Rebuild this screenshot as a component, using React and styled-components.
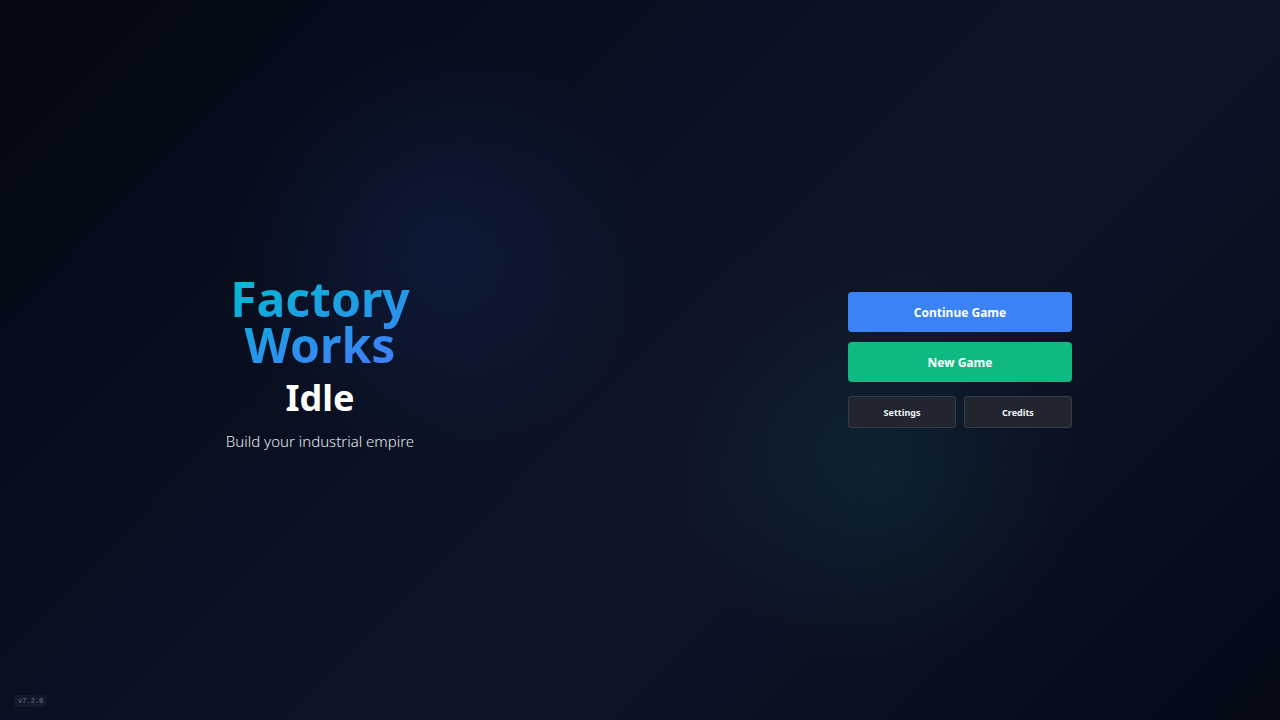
import styled, { createGlobalStyle } from 'styled-components';

const GlobalStyle = createGlobalStyle`
  * { box-sizing: border-box; }
  html, body { margin: 0; padding: 0; height: 100%; }
  body {
    font-family: "Noto Sans", "Open Sans", sans-serif;
    background: #0a0f1e;
    color: #f8fafc;
  }
  #root { height: 100%; }
`;

const Screen = styled.div`
  position: relative;
  width: 100vw;
  height: 100vh;
  overflow: hidden;
  display: grid;
  grid-template-columns: 1fr 1fr;
  align-items: center;
  background:
    radial-gradient(circle at 440px 250px, rgba(30, 64, 150, 0.2) 0, rgba(30, 64, 150, 0) 210px),
    radial-gradient(circle at 880px 470px, rgba(16, 120, 110, 0.15) 0, rgba(16, 120, 110, 0) 200px),
    linear-gradient(135deg, #030712 0%, #0b1224 45%, #0e1527 60%, #050916 100%);
`;

const TitleBlock = styled.div`
  display: flex;
  flex-direction: column;
  align-items: center;
  text-align: center;
  padding-top: 7px;
`;

const Title = styled.h1`
  margin: 0;
  font-size: 48px;
  font-weight: 700;
  line-height: 46px;
  background: linear-gradient(160deg, #06b6d4 10%, #3b82f6 85%);
  -webkit-background-clip: text;
  background-clip: text;
  color: transparent;
`;

const Subtitle = styled.h2`
  margin: 6px 0 0;
  font-size: 36px;
  font-weight: 700;
  line-height: 48px;
  color: #ffffff;
`;

const Tagline = styled.p`
  margin: 9px 0 0;
  font-size: 15px;
  font-weight: 300;
  color: #e2e8f0;
`;

const Menu = styled.div`
  justify-self: center;
  width: 224px;
  display: flex;
  flex-direction: column;
  gap: 10px;
`;

const MainButton = styled.button`
  height: 40px;
  border: none;
  border-radius: 4px;
  background: ${(p) => p.$bg};
  color: #ffffff;
  font-family: inherit;
  font-size: 12px;
  font-weight: 700;
  cursor: pointer;
`;

const SmallRow = styled.div`
  margin-top: 4px;
  display: grid;
  grid-template-columns: 1fr 1fr;
  gap: 8px;
`;

const SmallButton = styled.button`
  height: 32px;
  border: 1px solid #363b4a;
  border-radius: 3px;
  background: #22252f;
  color: #f1f5f9;
  font-family: inherit;
  font-size: 9px;
  font-weight: 700;
  cursor: pointer;
`;

const Version = styled.span`
  position: absolute;
  left: 14px;
  bottom: 13px;
  padding: 2px 4px;
  border-radius: 2px;
  background: rgba(255, 255, 255, 0.04);
  color: #64748b;
  font-family: "DejaVu Sans Mono", monospace;
  font-size: 7px;
`;

export default function App() {
  return (
    <>
      <GlobalStyle />
      <Screen>
        <TitleBlock>
          <Title>
            Factory
            <br />
            Works
          </Title>
          <Subtitle>Idle</Subtitle>
          <Tagline>Build your industrial empire</Tagline>
        </TitleBlock>
        <Menu>
          <MainButton $bg="#3b82f6">Continue Game</MainButton>
          <MainButton $bg="#10b981">New Game</MainButton>
          <SmallRow>
            <SmallButton>Settings</SmallButton>
            <SmallButton>Credits</SmallButton>
          </SmallRow>
        </Menu>
        <Version>v7.2.0</Version>
      </Screen>
    </>
  );
}
